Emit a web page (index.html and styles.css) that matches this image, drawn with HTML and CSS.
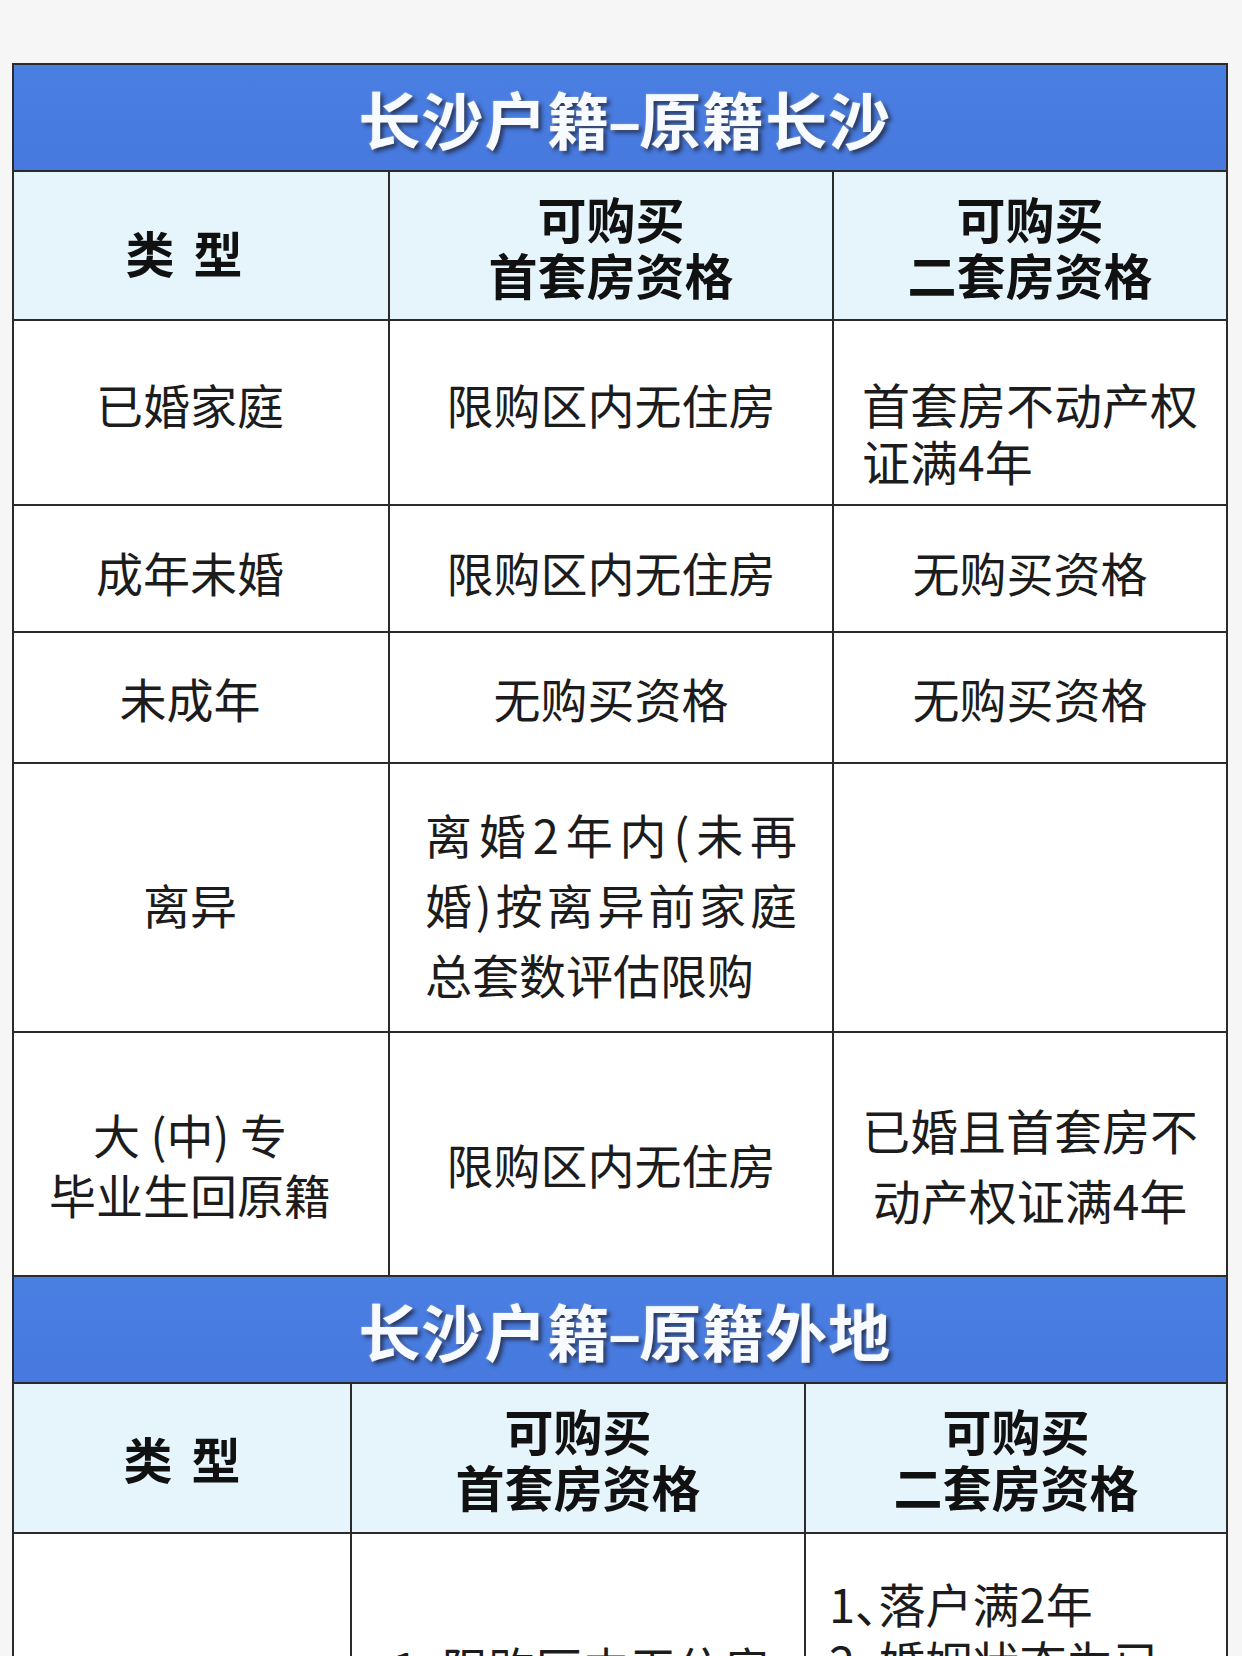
FILE: index.html
```html
<!DOCTYPE html>
<html lang="zh-CN">
<head>
<meta charset="utf-8">
<title>长沙户籍购房资格</title>
<link rel="stylesheet" href="styles.css">
</head>
<body>
<div class="page">
  <section class="sheet sheet-a">
    <div class="title">长沙户籍<span class="dash">–</span>原籍长沙</div>
    <div class="hd hd-type-a">类 型</div>
    <div class="hd"><span class="ln">可购买</span><span class="ln">首套房资格</span></div>
    <div class="hd"><span class="ln">可购买</span><span class="ln">二套房资格</span></div>

    <div class="cell c1a top">已婚家庭</div>
    <div class="cell top">限购区内无住房</div>
    <div class="cell top left c3a"><span class="ln">首套房不动产权</span><span class="ln">证满4年</span></div>

    <div class="cell c1a r2">成年未婚</div>
    <div class="cell r2">限购区内无住房</div>
    <div class="cell r2">无购买资格</div>

    <div class="cell c1a">未成年</div>
    <div class="cell">无购买资格</div>
    <div class="cell">无购买资格</div>

    <div class="cell c1a r4">离异</div>
    <div class="cell r4">
      <div class="just">
        <span class="jline">离婚2年内(未再</span>
        <span class="jline">婚)按离异前家庭</span>
        <span class="lline">总套数评估限购</span>
      </div>
    </div>
    <div class="cell r4"></div>

    <div class="cell c1a r5 lh60"><span class="ln">大 (中) 专</span><span class="ln">毕业生回原籍</span></div>
    <div class="cell r5">限购区内无住房</div>
    <div class="cell r5 c3a lh70"><span class="ln">已婚且首套房不</span><span class="ln">动产权证满4年</span></div>
  </section>

  <section class="sheet sheet-b">
    <div class="title">长沙户籍<span class="dash">–</span>原籍外地</div>
    <div class="hd">类 型</div>
    <div class="hd"><span class="ln">可购买</span><span class="ln">首套房资格</span></div>
    <div class="hd"><span class="ln">可购买</span><span class="ln">二套房资格</span></div>

    <div class="cell top b1">已婚家庭</div>
    <div class="cell top left b2 palt">1、限购区内无住房</div>
    <div class="cell top left b3 palt"><span class="ln">1、落户满2年</span><span class="ln">2、婚姻状态为已婚</span></div>
  </section>
</div>
</body>
</html>
```

FILE: styles.css
```css
html, body {
  margin: 0;
  padding: 0;
}

body {
  background: #f6f6f6;
  font-family: "Noto Sans CJK SC", "Noto Sans", sans-serif;
  color: #1c1c1c;
}

.page {
  padding: 63px 0 0 12px;
}

.sheet {
  box-sizing: border-box;
  width: 1216px;
  display: grid;
  gap: 2px;
  padding: 2px;
  background: #2b2b2b;
}

.sheet-a {
  grid-template-columns: 374px 442px 392px;
  grid-template-rows: 105px 147px 183px 125px 129px 267px 242px;
}

.sheet-b {
  padding-top: 0;
  grid-template-columns: 336px 452px 420px;
  grid-template-rows: 105px 148px 326px;
}

.title {
  grid-column: 1 / -1;
  display: flex;
  align-items: center;
  justify-content: center;
  background: linear-gradient(#4a7fe2, #4779de);
  color: #f7fbff;
  font-size: 62px;
  font-weight: 700;
  letter-spacing: 1px;
  padding-left: 10px;
  text-shadow: 3px 3px 4px rgba(30, 35, 60, 0.8), 0 0 2px rgba(255, 255, 255, 0.6);
}

.dash {
  display: inline-block;
  margin: 0 -3px;
}

.hd {
  display: flex;
  flex-direction: column;
  align-items: center;
  justify-content: center;
  text-align: center;
  background: #e6f5fb;
  color: #111;
  font-size: 49px;
  font-weight: 700;
  line-height: 56px;
  word-spacing: 8px;
}

.hd-type-a {
  padding-right: 34px;
  padding-top: 12px;
}

.ln {
  display: block;
}

.cell {
  display: flex;
  flex-direction: column;
  align-items: center;
  justify-content: center;
  text-align: center;
  background: #fff;
  font-size: 47px;
  line-height: 58px;
}

.c1a {
  padding-right: 22px;
}

.top {
  justify-content: flex-start;
  padding-top: 54px;
}

.left {
  align-items: flex-start;
  text-align: left;
}

.c3a {
  font-size: 48px;
}

.sheet-a .left.c3a {
  padding-left: 28px;
  line-height: 57px;
}

.r2 {
  padding-top: 7px;
}

.r4 {
  padding-top: 13px;
}

.r5 {
  padding-top: 20px;
}

.lh60 {
  line-height: 60px;
}

.lh70 {
  line-height: 70px;
}

.just {
  width: 372px;
  line-height: 70px;
  text-align: left;
}

.jline {
  display: block;
  text-align: justify;
  text-align-last: justify;
}

.lline {
  display: block;
}

.palt {
  font-feature-settings: "palt";
}

.b1 {
  padding-top: 140px;
}

.b2 {
  padding-top: 104px;
  padding-left: 40px;
}

.b3 {
  padding-top: 40px;
  padding-left: 23px;
  padding-right: 20px;
}
```
